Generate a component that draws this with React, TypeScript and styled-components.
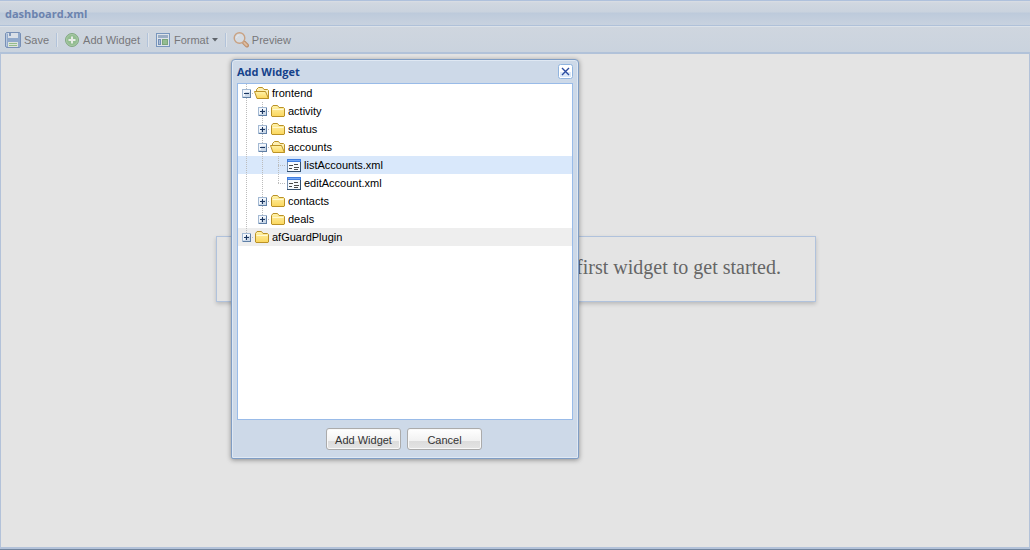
import React from "react";
import styled, { createGlobalStyle } from "styled-components";

const GlobalStyle = createGlobalStyle`
  html, body, #root { height: 100%; }
  body {
    margin: 0;
    font-family: "Liberation Sans", Arial, sans-serif;
    font-size: 11px;
    background: #e4e4e4;
  }
  * { box-sizing: border-box; }
`;

const Page = styled.div`
  position: relative;
  display: flex;
  flex-direction: column;
  min-height: 100%;
  border-bottom: 1px solid #71849d;
`;

const TitleBar = styled.header`
  height: 26px;
  padding: 0 5px;
  border-top: 1px solid #afc1dc;
  border-bottom: 1px solid #afc1d9;
  background: linear-gradient(#d9dee4 0, #d0d7e0 2px, #cad3de 11px, #bdcadb 12px, #c8d2df 100%);
`;

const PageTitle = styled.h1`
  margin: 0;
  font: bold 11px/25px "Open Sans", Tahoma, sans-serif;
  color: #6c83ae;
`;

const Toolbar = styled.div`
  display: flex;
  align-items: center;
  height: 28px;
  padding: 0 4px;
  border-top: 1px solid #dce2e9;
  border-bottom: 2px solid #b1c2d9;
  background: linear-gradient(#cfd6df, #cad3de);
`;

const ToolButton = styled.button`
  display: flex;
  align-items: center;
  gap: 3px;
  height: 22px;
  padding: 0 1px;
  border: 0;
  background: none;
  font: 11px/16px "Liberation Sans", Arial, sans-serif;
  color: #77777a;
`;

const Separator = styled.span`
  width: 2px;
  height: 14px;
  margin: 0 5px 0 6px;
  border-left: 1px solid #b2c3da;
  border-right: 1px solid #dfe4ea;
`;

const Canvas = styled.main`
  flex: 1;
  padding: 182px 0 0 2px;
  border: solid #b3c2d9;
  border-width: 0 1px 2px;
  background: #e4e4e4;
`;

const Notice = styled.p`
  width: 600px;
  max-width: 100%;
  margin: 0 auto;
  padding: 16px 34px 20px;
  border: 1px solid #b0c2dc;
  box-shadow: 0 2px 4px rgba(0, 0, 0, 0.18);
  font: 20px/28px "Liberation Serif", "Times New Roman", serif;
  text-align: right;
  color: #666;
`;

const Dialog = styled.section`
  position: absolute;
  left: 231px;
  top: 59px;
  width: 348px;
  padding: 0 5px 8px;
  border: 1px solid #7f9dc4;
  border-radius: 4px 4px 2px 2px;
  background: #cdd9e8;
  box-shadow: inset 0 0 0 1px #dfe8f3, 0 1px 5px rgba(0, 0, 0, 0.4);
`;

const DialogHeader = styled.div`
  display: flex;
  align-items: center;
  justify-content: space-between;
  height: 23px;
`;

const DialogTitle = styled.h2`
  margin: 0;
  font: bold 11px/15px "Open Sans", Tahoma, sans-serif;
  color: #15428b;
`;

const CloseButton = styled.button`
  display: flex;
  width: 15px;
  height: 15px;
  padding: 0;
  border: 0;
  background: none;
`;

const Tree = styled.ul`
  height: 337px;
  margin: 0;
  padding: 0;
  border: 1px solid #99bbe8;
  background: #fff;
  list-style: none;
`;

const TreeRow = styled.li<{ $tone?: string }>`
  display: flex;
  height: 18px;
  line-height: 18px;
  color: #000;
  background: ${(p) => p.$tone ?? "transparent"};
`;

const TreeLabel = styled.span`
  padding-left: 2px;
`;

const Actions = styled.div`
  display: flex;
  justify-content: center;
  gap: 6px;
  padding: 8px 2px 0 0;
`;

const ActionButton = styled.button`
  width: 75px;
  height: 22px;
  padding: 2px 0 0;
  border: 1px solid #ababab;
  border-radius: 3px;
  background: linear-gradient(#fff, #f2f2f2 58%, #dcdcdc 60%, #e4e4e4);
  box-shadow: inset 0 0 0 1px #f8f8f8;
  font: 11px/18px "Liberation Sans", Arial, sans-serif;
  color: #333;
`;

const Glyph = styled.svg`
  display: block;
  flex: none;
`;

type Guide = "none" | "line" | "tee" | "end" | "plus" | "plusEnd" | "minus";

function GuideCell({ kind }: { kind: Guide }) {
  const ends = kind === "end" || kind === "plusEnd";
  const box = kind === "plus" || kind === "plusEnd" || kind === "minus";
  return (
    <Glyph width="16" height="18" shapeRendering="crispEdges" aria-hidden="true">
      {kind !== "none" && (
        <path d={ends ? "M8.5 0V10" : "M8.5 0V18"} stroke="#bcbcbc" strokeDasharray="1 1" />
      )}
      {kind !== "none" && kind !== "line" && (
        <path d="M8 9.500H16" stroke="#bcbcbc" strokeDasharray="1 1" />
      )}
      {box && (
        <g>
          <rect x="4" y="5" width="9" height="9" fill="#a3b9d3" />
          <rect x="5" y="6" width="7" height="7" fill="#ccd9e8" />
          <path d="M5 6h7v2h-5v4h-2z" fill="#f2f6fb" />
          <path d="M5 13.500h8M12.500 6v8" stroke="#5f7fa6" />
          <path d="M6 9.500h5" stroke="#1c3660" />
          {kind !== "minus" && <path d="M8.500 7v5" stroke="#1c3660" />}
        </g>
      )}
    </Glyph>
  );
}

function FolderIcon({ open }: { open?: boolean }) {
  return (
    <Glyph width="16" height="18" aria-hidden="true">
      <defs>
        <linearGradient id="folderFill" x1="0" y1="0" x2="0" y2="1">
          <stop offset="0" stopColor="#fff3ac" />
          <stop offset="1" stopColor="#fbd65c" />
        </linearGradient>
      </defs>
      {open ? (
        <g stroke="#bb9226" strokeLinejoin="round">
          <path d="M2.500 8V5.500L4.500 3.500H8.500L10 5.500H13.500L14.500 6.500V14.500H4Z" fill="#fdf0b4" />
          <path d="M0.500 7.500H11.500L14.500 14.500H3Z" fill="url(#folderFill)" />
        </g>
      ) : (
        <g stroke="#bb9226" strokeLinejoin="round">
          <path d="M1.500 14V5.500L3 3.500H7.500L9 5.500H13.500L14.500 6.500V14L14 14.500H2Z" fill="url(#folderFill)" />
          <path d="M2.500 7.500H13.500" stroke="#fff9d2" />
        </g>
      )}
    </Glyph>
  );
}

function FormIcon() {
  return (
    <Glyph width="16" height="18" shapeRendering="crispEdges" aria-hidden="true">
      <rect x="1.500" y="3.500" width="13" height="12" fill="#f7fafd" stroke="#7590b0" />
      <path d="M1 3h14v3H1z" fill="#3f7de0" />
      <path d="M2 4.500h12" stroke="#75a9f5" />
      <path d="M14.500 6v10M1 15.500h14" stroke="#34506f" />
      <path d="M8 8.500h4M3 9.500h4M8 11.500h5M3 12.500h3M8 13.500h4" stroke="#4a4a4a" />
    </Glyph>
  );
}

function SaveIcon() {
  return (
    <Glyph width="16" height="16" aria-hidden="true">
      <path d="M.5 1.500 1.500.5H14.500L15.500 1.500V14.500L14.500 15.500H1.500L.5 14.500Z" fill="#91a9cb" stroke="#7890b6" />
      <path d="M1.500 14V1.500H3" fill="none" stroke="#b7c8df" />
      <path d="M3 1h10v5H3z" fill="#d9dfe7" />
      <path d="M4 1h2v3H4z" fill="#8299bb" />
      <path d="M3 10h10v5H3z" fill="#dde2dd" />
      <path d="M4 11.500h8M4 13.500h8" stroke="#94bd8b" />
    </Glyph>
  );
}

function AddIcon() {
  return (
    <Glyph width="16" height="16" aria-hidden="true">
      <circle cx="8" cy="8" r="6.500" fill="#93bd91" stroke="#83a884" />
      <circle cx="8" cy="8" r="5.500" fill="none" stroke="#a8c9a5" />
      <path d="M8 4.500v7M4.500 8h7" stroke="#e7ebe6" strokeWidth="2" />
    </Glyph>
  );
}

function FormatIcon() {
  return (
    <Glyph width="16" height="16" shapeRendering="crispEdges" aria-hidden="true">
      <rect x="1.500" y="1.500" width="13" height="13" fill="#dde3e9" stroke="#7896bd" />
      <path d="M3 3h10v3H3z" fill="#9aadc4" />
      <rect x="3.500" y="7.500" width="2" height="5" fill="#a9bdd8" stroke="#738fb7" />
      <rect x="7.500" y="7.500" width="5" height="5" fill="#94bd91" stroke="#7aa57c" />
    </Glyph>
  );
}

function PreviewIcon() {
  return (
    <Glyph width="16" height="16" aria-hidden="true">
      <path d="m11 10.500 3 3" stroke="#bd8f6c" strokeWidth="4" strokeLinecap="round" />
      <path d="m11.200 10.700 2.500 2.500" stroke="#dcbb9f" strokeWidth="2" strokeLinecap="round" />
      <circle cx="6.500" cy="6" r="5.300" fill="#d5dbe2" stroke="#c9a283" strokeWidth="1.400" />
      <path d="M3.500 6a3 3 0 0 1 3-3" fill="none" stroke="#e5e8ec" />
    </Glyph>
  );
}

function CloseIcon() {
  return (
    <Glyph width="15" height="15" aria-hidden="true">
      <rect x=".5" y=".5" width="14" height="14" rx="2" fill="#fff" stroke="#90b4df" />
      <path d="M2 8h11v5H2z" fill="#dbe9f9" />
      <path d="m4 4 7 7m0-7-7 7" stroke="#2b4ba0" strokeWidth="1.400" />
    </Glyph>
  );
}

interface Node {
  label: string;
  guides: Guide[];
  icon: "folder" | "open" | "form";
  tone?: string;
}

const nodes: Node[] = [
  { label: "frontend", guides: ["minus"], icon: "open" },
  { label: "activity", guides: ["line", "plus"], icon: "folder" },
  { label: "status", guides: ["line", "plus"], icon: "folder" },
  { label: "accounts", guides: ["line", "minus"], icon: "open" },
  { label: "listAccounts.xml", guides: ["line", "line", "tee"], icon: "form", tone: "#d9e8fb" },
  { label: "editAccount.xml", guides: ["line", "line", "end"], icon: "form" },
  { label: "contacts", guides: ["line", "plus"], icon: "folder" },
  { label: "deals", guides: ["line", "plusEnd"], icon: "folder" },
  { label: "afGuardPlugin", guides: ["plusEnd"], icon: "folder", tone: "#eee" },
];

export default function App() {
  return (
    <>
      <GlobalStyle />
      <Page>
        <TitleBar>
          <PageTitle>dashboard.xml</PageTitle>
        </TitleBar>
        <Toolbar role="toolbar">
          <ToolButton type="button"><SaveIcon />Save</ToolButton>
          <Separator />
          <ToolButton type="button"><AddIcon />Add Widget</ToolButton>
          <Separator />
          <ToolButton type="button">
            <FormatIcon />Format
            <Glyph width="6" height="4" aria-hidden="true"><path d="M0 0h6L3 3.500z" fill="#5f646b" /></Glyph>
          </ToolButton>
          <Separator />
          <ToolButton type="button"><PreviewIcon />Preview</ToolButton>
        </Toolbar>
        <Canvas>
          <Notice>Add your first widget to get started.</Notice>
        </Canvas>
        <Dialog role="dialog" aria-labelledby="dialog-title">
          <DialogHeader>
            <DialogTitle id="dialog-title">Add Widget</DialogTitle>
            <CloseButton type="button" aria-label="Close"><CloseIcon /></CloseButton>
          </DialogHeader>
          <Tree role="tree">
            {nodes.map((n) => (
              <TreeRow key={n.label} role="treeitem" aria-level={n.guides.length} $tone={n.tone}>
                {n.guides.map((g, i) => <GuideCell key={i} kind={g} />)}
                {n.icon === "form" ? <FormIcon /> : <FolderIcon open={n.icon === "open"} />}
                <TreeLabel>{n.label}</TreeLabel>
              </TreeRow>
            ))}
          </Tree>
          <Actions>
            <ActionButton type="button">Add Widget</ActionButton>
            <ActionButton type="button">Cancel</ActionButton>
          </Actions>
        </Dialog>
      </Page>
    </>
  );
}
